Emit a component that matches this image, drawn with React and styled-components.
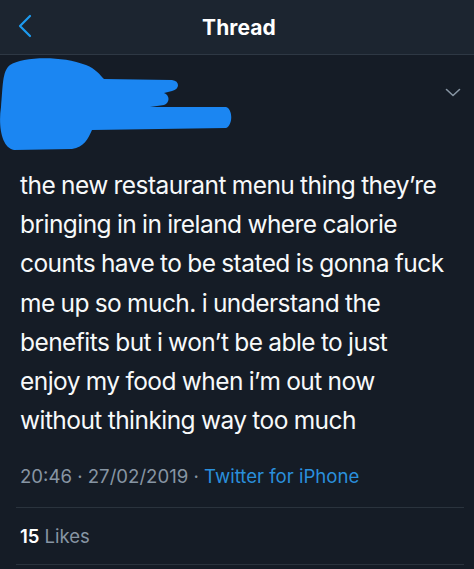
import React from 'react';
import styled, { createGlobalStyle } from 'styled-components';

const GlobalStyle = createGlobalStyle`
  html, body {
    margin: 0;
    padding: 0;
    background: #151c26;
  }
  body {
    font-family: Inter, "Liberation Sans", sans-serif;
    -webkit-font-smoothing: antialiased;
  }
`;

const Screen = styled.div`
  width: 474px;
  height: 569px;
  overflow: hidden;
  background: #151c26;
  color: #f5f8fa;
`;

const NavBar = styled.header`
  height: 54px;
  display: flex;
  align-items: center;
  justify-content: center;
  position: relative;
  background: #1c2530;
  border-bottom: 1px solid #2e3844;
`;

const BackButton = styled.button`
  position: absolute;
  left: 12px;
  top: 12px;
  width: 26px;
  height: 28px;
  padding: 0;
  border: 0;
  background: none;
  display: flex;
  align-items: center;
  justify-content: center;
`;

const Title = styled.h1`
  margin: 0 0 0 4px;
  font-size: 21px;
  font-weight: 700;
  color: #ffffff;
  letter-spacing: 0.1px;
`;

const AuthorRow = styled.div`
  height: 96px;
  display: flex;
  justify-content: space-between;
  align-items: flex-start;
`;

const Caret = styled.div`
  margin: 33px 13px 0 0;
  display: flex;
`;

const Tweet = styled.section`
  padding: 15px 6px 0 20px;
`;

const Body = styled.p`
  margin: 0;
  font-size: 24.5px;
  line-height: 39.2px;
  letter-spacing: -0.55px;
  word-spacing: -0.5px;
  color: #f7f9fa;
`;

const Line = styled.span`
  display: block;
  white-space: nowrap;
`;

const Meta = styled.div`
  margin-top: 24px;
  font-size: 18.6px;
  line-height: 24px;
  color: #8795a3;
`;

const Source = styled.span`
  color: #2a8fdc;
`;

const Divider = styled.div`
  height: 1px;
  background: #2a333d;
  margin: ${p => p.$gap}px 10px 0 16px;
`;

const Stats = styled.div`
  padding: 0 0 0 20px;
  height: 56px;
  display: flex;
  align-items: center;
  font-size: 18.5px;
  color: #8795a3;
`;

const Count = styled.strong`
  color: #ffffff;
  font-weight: 600;
  margin-right: 5px;
`;

const lines = [
  'the new restaurant menu thing they’re',
  'bringing in in ireland where calorie',
  'counts have to be stated is gonna fuck',
  'me up so much. i understand the',
  'benefits but i won’t be able to just',
  'enjoy my food when i’m out now',
  'without thinking way too much',
];

const Scribble = () => (
  <svg width="240" height="96" viewBox="0 0 240 96" fill="#1b86f2">
    <path d="M10 10 C 22 2, 60 0, 86 10 C 96 14, 100 20, 104 24 L 172 25 C 180 26, 180 34, 172 36 L 164 38 C 170 40, 170 48, 164 50 L 150 52 L 226 52 C 233 54, 233 70, 226 73 L 92 75 C 88 84, 84 92, 72 94 L 14 95 C 2 93, -2 72, 1 52 C 3 32, 2 16, 10 10 Z" />
  </svg>
);

export default function App() {
  return (
    <Screen>
      <GlobalStyle />
      <NavBar>
        <BackButton aria-label="Back">
          <svg width="14" height="24" viewBox="0 0 14 24" fill="none" stroke="#1d9bf0" strokeWidth="2.2" strokeLinecap="round" strokeLinejoin="round">
            <path d="M12 2 L2 12 L12 22" />
          </svg>
        </BackButton>
        <Title>Thread</Title>
      </NavBar>
      <AuthorRow>
        <Scribble />
        <Caret>
          <svg width="16" height="9" viewBox="0 0 16 9" fill="none" stroke="#8795a3" strokeWidth="1.6" strokeLinecap="round" strokeLinejoin="round">
            <path d="M1.5 1.5 L8 7.5 L14.5 1.5" />
          </svg>
        </Caret>
      </AuthorRow>
      <Tweet>
        <Body>
          {lines.map(l => (
            <Line key={l}>{l}</Line>
          ))}
        </Body>
        <Meta>
          20:46 · 27/02/2019 · <Source>Twitter for iPhone</Source>
        </Meta>
      </Tweet>
      <Divider $gap={19} />
      <Stats>
        <Count>15</Count>Likes
      </Stats>
      <Divider $gap={0} />
    </Screen>
  );
}
